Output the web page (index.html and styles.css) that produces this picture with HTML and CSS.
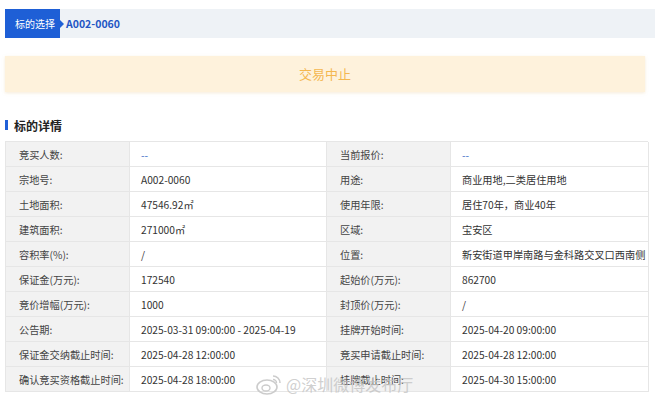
FILE: index.html
```html
<!DOCTYPE html>
<html lang="zh-CN">
<head>
    <meta charset="UTF-8">
    <meta name="viewport" content="width=device-width, initial-scale=1.0">
    <title>标的详情</title>
    <link rel="stylesheet" href="styles.css">
</head>
<body>
    <div class="page">
        <div class="crumb-bar">
            <span class="crumb-tab">标的选择</span>
            <span class="crumb-code">A002-0060</span>
        </div>

        <div class="status-banner">交易中止</div>

        <h2 class="section-title">标的详情</h2>

        <div class="detail-table">
            <div class="cell label">竞买人数:</div>
            <div class="cell value empty">--</div>
            <div class="cell label">当前报价:</div>
            <div class="cell value empty">--</div>

            <div class="cell label">宗地号:</div>
            <div class="cell value">A002-0060</div>
            <div class="cell label">用途:</div>
            <div class="cell value">商业用地,二类居住用地</div>

            <div class="cell label">土地面积:</div>
            <div class="cell value">47546.92㎡</div>
            <div class="cell label">使用年限:</div>
            <div class="cell value">居住70年，商业40年</div>

            <div class="cell label">建筑面积:</div>
            <div class="cell value">271000㎡</div>
            <div class="cell label">区域:</div>
            <div class="cell value">宝安区</div>

            <div class="cell label">容积率(%):</div>
            <div class="cell value">/</div>
            <div class="cell label">位置:</div>
            <div class="cell value">新安街道甲岸南路与金科路交叉口西南侧</div>

            <div class="cell label">保证金(万元):</div>
            <div class="cell value">172540</div>
            <div class="cell label">起始价(万元):</div>
            <div class="cell value">862700</div>

            <div class="cell label">竞价增幅(万元):</div>
            <div class="cell value">1000</div>
            <div class="cell label">封顶价(万元):</div>
            <div class="cell value">/</div>

            <div class="cell label">公告期:</div>
            <div class="cell value">2025-03-31 09:00:00 - 2025-04-19</div>
            <div class="cell label">挂牌开始时间:</div>
            <div class="cell value">2025-04-20 09:00:00</div>

            <div class="cell label">保证金交纳截止时间:</div>
            <div class="cell value">2025-04-28 12:00:00</div>
            <div class="cell label">竞买申请截止时间:</div>
            <div class="cell value">2025-04-28 12:00:00</div>

            <div class="cell label">确认竞买资格截止时间:</div>
            <div class="cell value">2025-04-28 18:00:00</div>
            <div class="cell label">挂牌截止时间:</div>
            <div class="cell value">2025-04-30 15:00:00</div>
        </div>

        <!-- 水印 -->
        <div class="watermark">
            <svg width="26" height="22" viewBox="0 0 26 22">
                <ellipse cx="11" cy="14" rx="10" ry="7" fill="none" stroke="#cccccc" stroke-width="1.6"/>
                <ellipse cx="10" cy="15" rx="4" ry="3" fill="none" stroke="#cccccc" stroke-width="1.4"/>
                <path d="M17 3 A7 7 0 0 1 24 10" fill="none" stroke="#cccccc" stroke-width="1.6"/>
                <path d="M17 6.5 A3.5 3.5 0 0 1 20.5 10" fill="none" stroke="#cccccc" stroke-width="1.4"/>
            </svg>
            <span>@深圳微博发布厅</span>
        </div>
    </div>
</body>
</html>
```

FILE: styles.css
```css
* {
    margin: 0;
    padding: 0;
    box-sizing: border-box;
}
body {
    background-color: #fff;
    font-family: "Noto Sans CJK SC", "Noto Sans", sans-serif;
    color: #333;
}
.page {
    position: relative;
    padding: 9px 0 0 5px;
    width: 655px;
    height: 398px;
    overflow: hidden;
}
.crumb-bar {
    display: flex;
    align-items: center;
    height: 29px;
    background-color: #eef2f6;
}
.crumb-tab {
    position: relative;
    display: flex;
    align-items: center;
    height: 100%;
    width: 55px;
    padding-left: 10px;
    background-color: #1e5fd6;
    color: #fff;
    font-size: 10px;
}
.crumb-tab::after {
    content: "";
    position: absolute;
    right: -4px;
    top: 50%;
    margin-top: -4px;
    border-left: 4px solid #1e5fd6;
    border-top: 4px solid transparent;
    border-bottom: 4px solid transparent;
}
.crumb-code {
    margin-left: 6px;
    color: #2356c4;
    font-size: 10.5px;
    font-weight: bold;
}
.status-banner {
    margin-top: 18px;
    width: 640px;
    height: 36px;
    line-height: 36px;
    background-color: #fef2dc;
    box-shadow: 0 1px 3px rgba(230, 200, 150, 0.35);
    color: #f4b750;
    font-size: 13px;
    text-align: center;
}
.section-title {
    display: flex;
    align-items: center;
    gap: 6px;
    margin-top: 24px;
    height: 18px;
    font-size: 12px;
    font-weight: bold;
    color: #222;
}
.section-title::before {
    content: "";
    width: 3px;
    height: 10px;
    background-color: #2060d8;
}
.detail-table {
    display: grid;
    grid-template-columns: 124px 197px 124px 198px;
    grid-auto-rows: 25px;
    margin-top: 7px;
    width: 643px;
    border-left: 1px solid #e6e6e6;
    border-top: 1px solid #e6e6e6;
}
.cell {
    display: flex;
    align-items: center;
    border-right: 1px solid #e6e6e6;
    border-bottom: 1px solid #e6e6e6;
    font-size: 10.2px;
    white-space: nowrap;
    overflow: hidden;
}
.cell.label {
    background-color: #f2f2f2;
    padding-left: 13px;
    color: #444;
}
.cell.value {
    background-color: #fff;
    padding-left: 11px;
    color: #333;
}
.cell.empty {
    color: #3d6cc7;
}
.watermark {
    position: absolute;
    left: 256px;
    top: 372px;
    display: flex;
    align-items: center;
    gap: 4px;
    color: rgba(195, 195, 195, 0.8);
    font-size: 16px;
    pointer-events: none;
}
```
